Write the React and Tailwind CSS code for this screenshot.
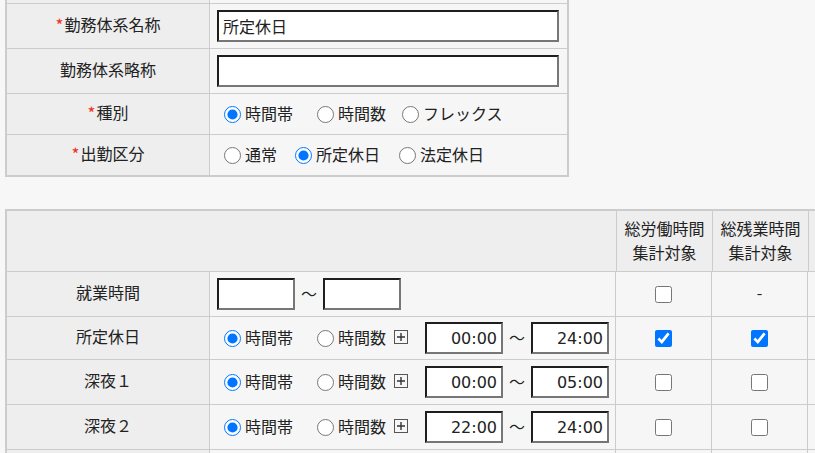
import React from 'react';

const font = { fontFamily: '"Noto Sans CJK JP", "Noto Sans", sans-serif' };
const numFont = { fontFamily: '"DejaVu Sans", "Noto Sans CJK JP", sans-serif' };

function Req() {
  return <span className="text-[#f0321e] text-[17px] mr-[1px] translate-y-[1px]">*</span>;
}

function Radio({ label, checked, className = '' }) {
  return (
    <label className={`flex items-center shrink-0 ${className}`}>
      <input
        type="radio"
        defaultChecked={checked}
        className="w-[17px] h-[17px] m-0 accent-[#0075ff]"
      />
      <span className="ml-[4px] mb-[3px] whitespace-nowrap">{label}</span>
    </label>
  );
}

function PlusBox() {
  return (
    <svg width="14" height="14" viewBox="0 0 14 14" className="shrink-0 ml-[8px] mb-[2px]">
      <rect x="0.5" y="0.5" width="13" height="13" fill="none" stroke="#555" />
      <path d="M3 7h8M7 3v8" stroke="#333" strokeWidth="1.4" />
    </svg>
  );
}

function TextBox({ value, className = '', num }) {
  return (
    <input
      type="text"
      defaultValue={value}
      className={`h-[32px] border-2 border-t-[#1e1e1e] border-l-[#1e1e1e] border-b-[#767676] border-r-[#767676] bg-white px-[4px] text-[16px] text-[#222] outline-none ${num ? 'text-right' : ''} ${className}`}
      style={num ? numFont : font}
    />
  );
}

function Tilde() {
  return <span className="mx-[6px] mb-[3px] text-[16px] leading-none">～</span>;
}

function Check({ checked }) {
  return (
    <input type="checkbox" defaultChecked={checked} className="w-[17px] h-[17px] m-0 accent-[#0075ff]" />
  );
}

function TopRow({ label, req, h, children }) {
  return (
    <div className={`flex border-t border-[#cccccc] ${h}`}>
      <div className="w-[203px] shrink-0 border-r border-[#cccccc] bg-[#eeeeee] flex items-center justify-center pb-[4px]">
        {req && <Req />}
        <span>{label}</span>
      </div>
      <div className="flex-1 flex items-center bg-[#f6f6f6]">{children}</div>
    </div>
  );
}

function TimeRow({ label, h, from, to, total, over }) {
  return (
    <div className={`flex border-t border-[#cccccc] ${h}`}>
      <div className="w-[203px] shrink-0 border-r border-[#cccccc] bg-[#eeeeee] flex items-center justify-center pb-[4px]">
        {label}
      </div>
      <div className="w-[406px] shrink-0 border-r border-[#cccccc] flex items-center pl-[14px]">
        <Radio label="時間帯" checked />
        <Radio label="時間数" className="ml-[24px]" />
        <PlusBox />
        <TextBox value={from} num className="w-[78px] ml-[17px]" />
        <Tilde />
        <TextBox value={to} num className="w-[78px]" />
      </div>
      <div className="w-[96px] shrink-0 border-r border-[#cccccc] flex items-center justify-center">
        <Check checked={total} />
      </div>
      <div className="w-[96px] shrink-0 border-r border-[#cccccc] flex items-center justify-center">
        <Check checked={over} />
      </div>
      <div className="flex-1" />
    </div>
  );
}

export default function App() {
  return (
    <div className="w-[815px] h-[453px] overflow-hidden bg-[#f7f7f7] text-[16px] text-[#222]" style={font}>
      {/* 基本情報 */}
      <div className="ml-[5px] w-[564px] border-x-2 border-b-2 border-[#cccccc]">
        <div className="flex h-[3px]">
          <div className="w-[203px] shrink-0 border-r border-[#cccccc] bg-[#eeeeee]" />
          <div className="flex-1 bg-[#f6f6f6]" />
        </div>
        <TopRow label="勤務体系名称" req h="h-[45px]">
          <TextBox value="所定休日" className="w-[342px] ml-[7px]" />
        </TopRow>
        <TopRow label="勤務体系略称" h="h-[45px]">
          <TextBox value="" className="w-[342px] ml-[7px]" />
        </TopRow>
        <TopRow label="種別" req h="h-[41px]">
          <div className="flex items-center pl-[14px]">
            <Radio label="時間帯" checked />
            <Radio label="時間数" className="ml-[24px]" />
            <Radio label="フレックス" className="ml-[16px]" />
          </div>
        </TopRow>
        <TopRow label="出勤区分" req h="h-[41px]">
          <div className="flex items-center pl-[14px]">
            <Radio label="通常" checked={false} />
            <Radio label="所定休日" checked className="ml-[18px]" />
            <Radio label="法定休日" className="ml-[19px]" />
          </div>
        </TopRow>
      </div>

      {/* 時間設定 */}
      <div className="mt-[32px] ml-[5px] w-[840px] border-l-2 border-t-2 border-[#cccccc]">
        <div className="flex h-[60px] bg-[#eeeeee]">
          <div className="w-[610px] shrink-0 border-r border-[#cccccc]" />
          <div className="w-[96px] shrink-0 border-r border-[#cccccc] flex flex-col items-center justify-center leading-[24px] pb-[2px]">
            <span>総労働時間</span>
            <span>集計対象</span>
          </div>
          <div className="w-[96px] shrink-0 border-r border-[#cccccc] flex flex-col items-center justify-center leading-[24px] pb-[2px]">
            <span>総残業時間</span>
            <span>集計対象</span>
          </div>
          <div className="flex-1" />
        </div>

        <div className="bg-[#f6f6f6]">
          <div className="flex h-[45px] border-t border-[#cccccc]">
            <div className="w-[203px] shrink-0 border-r border-[#cccccc] bg-[#eeeeee] flex items-center justify-center pb-[4px]">
              就業時間
            </div>
            <div className="w-[406px] shrink-0 border-r border-[#cccccc] flex items-center pl-[7px]">
              <TextBox value="" className="w-[78px]" />
              <Tilde />
              <TextBox value="" className="w-[78px]" />
            </div>
            <div className="w-[96px] shrink-0 border-r border-[#cccccc] flex items-center justify-center">
              <Check />
            </div>
            <div className="w-[96px] shrink-0 border-r border-[#cccccc] flex items-center justify-center pb-[4px]">
              -
            </div>
            <div className="flex-1" />
          </div>
          <TimeRow label="所定休日" h="h-[43px]" from="00:00" to="24:00" total over />
          <TimeRow label="深夜１" h="h-[45px]" from="00:00" to="05:00" />
          <TimeRow label="深夜２" h="h-[45px]" from="22:00" to="24:00" />
          <div className="flex h-[20px] border-t border-[#cccccc]">
            <div className="w-[203px] shrink-0 border-r border-[#cccccc] bg-[#eeeeee]" />
            <div className="w-[406px] shrink-0 border-r border-[#cccccc]" />
            <div className="w-[96px] shrink-0 border-r border-[#cccccc]" />
            <div className="w-[96px] shrink-0 border-r border-[#cccccc]" />
          </div>
        </div>
      </div>
    </div>
  );
}
